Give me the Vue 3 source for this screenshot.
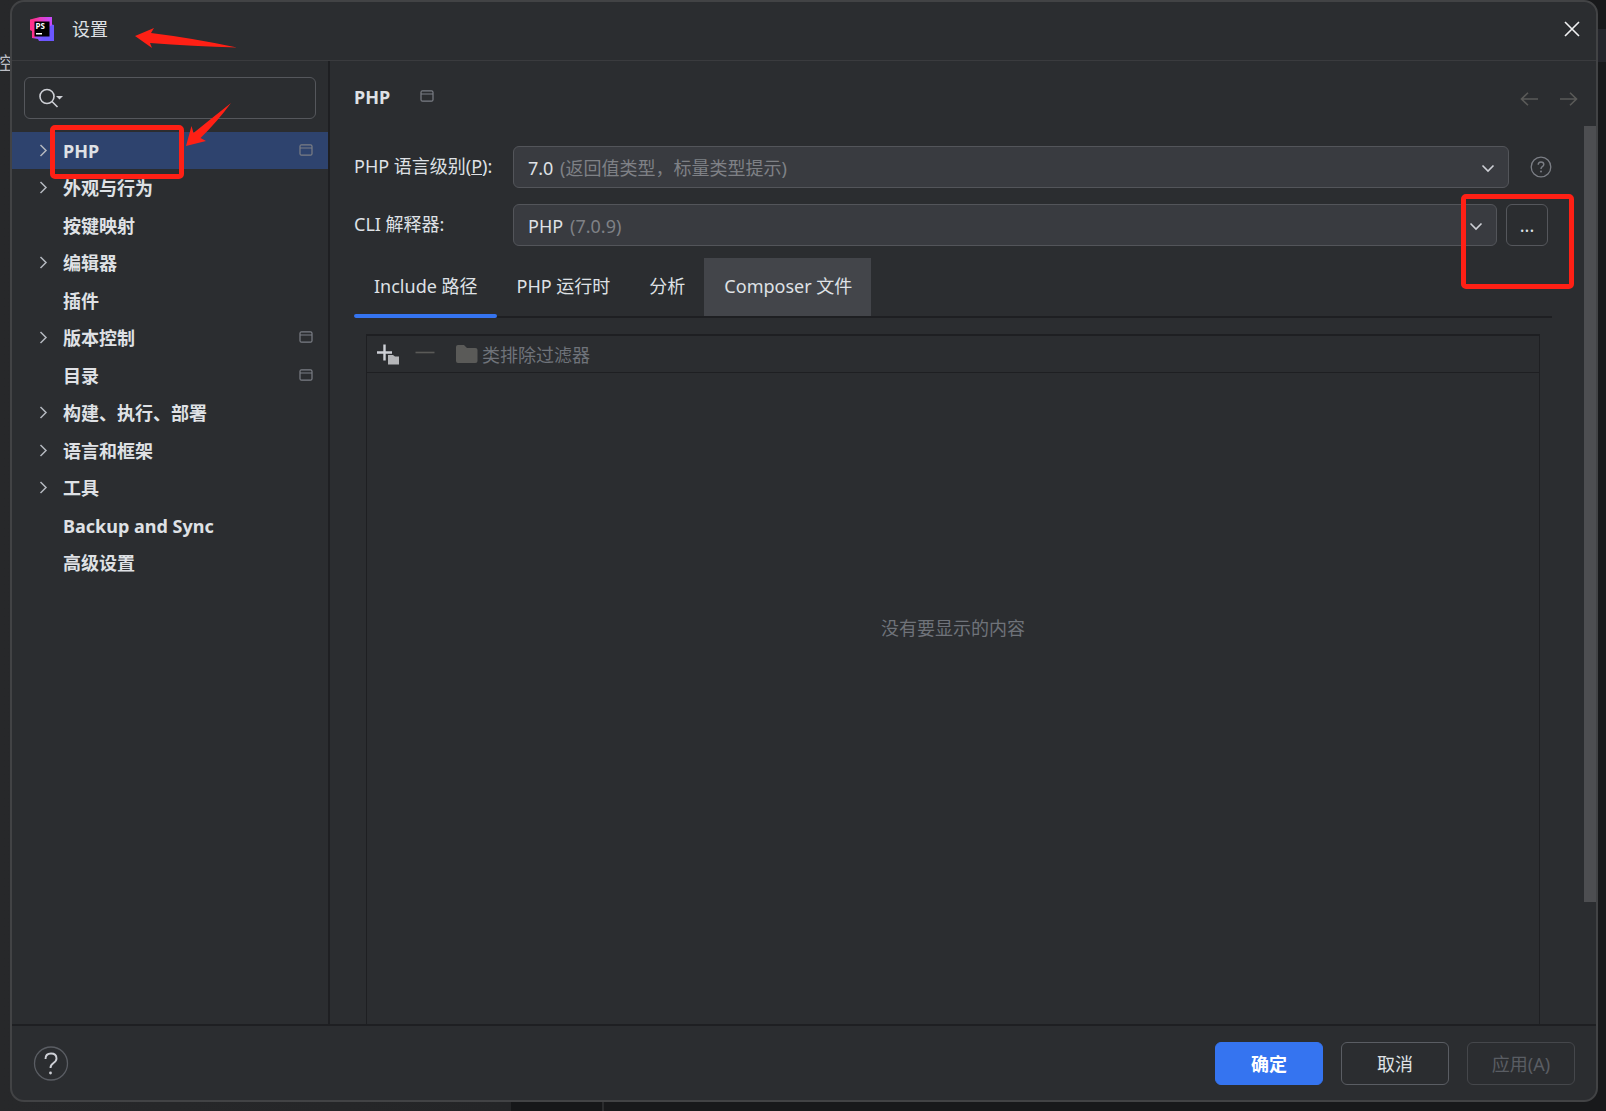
<script setup>
import { ref } from 'vue'

const items = [
  { label: 'PHP', expandable: true, project: true },
  { label: '外观与行为', expandable: true },
  { label: '按键映射' },
  { label: '编辑器', expandable: true },
  { label: '插件' },
  { label: '版本控制', expandable: true, project: true },
  { label: '目录', project: true },
  { label: '构建、执行、部署', expandable: true },
  { label: '语言和框架', expandable: true },
  { label: '工具', expandable: true },
  { label: 'Backup and Sync' },
  { label: '高级设置' }
]
const tabs = ['Include 路径', 'PHP 运行时', '分析', 'Composer 文件']

const selected = ref('PHP')
const activeTab = ref('Include 路径')
const query = ref('')
</script>

<template>
  <div class="desktop">
    <span class="editor-char" aria-hidden="true">控</span>
    <i class="editor-band"></i>

    <section class="dialog" role="dialog" aria-labelledby="dialog-title">
      <header class="titlebar">
        <svg class="logo" width="24" height="24" viewBox="0 0 24 24" aria-hidden="true">
          <defs>
            <linearGradient id="pink" x1="0" y1="0.4" x2="1" y2="0.1">
              <stop offset="0.2" stop-color="#ff318c" />
              <stop offset="0.9" stop-color="#c84af7" />
            </linearGradient>
            <linearGradient id="violet" x1="0" y1="0.5" x2="1" y2="0.5">
              <stop offset="0" stop-color="#c04af7" />
              <stop offset="0.5" stop-color="#6b57ff" />
            </linearGradient>
          </defs>
          <path d="M2 14V21L8 22L9 24H24V8L20 7Z" fill="url(#violet)" />
          <path d="M0 2.500L10 0H22V8L12 14L4 21L2 20.500V14L0 13Z" fill="url(#pink)" />
          <rect x="4.500" y="4.500" width="15" height="15" fill="#000" />
          <rect x="6" y="16" width="6" height="1.500" fill="#fff" />
          <text x="5.500" y="12" class="logo-text">PS</text>
        </svg>
        <h1 id="dialog-title">设置</h1>
        <button class="icon-button close" aria-label="关闭">
          <svg width="16" height="16" viewBox="0 0 16 16"><path d="M1 1L15 15M15 1L1 15" stroke="#f0f1f2" stroke-width="1.600" fill="none" /></svg>
        </button>
      </header>

      <div class="body">
        <aside class="sidebar">
          <label class="search">
            <svg width="26" height="20" viewBox="0 0 26 20" aria-hidden="true">
              <circle cx="8" cy="8.500" r="7" fill="none" stroke="#ced0d6" stroke-width="1.600" />
              <path d="M13 13.500L18.500 19" stroke="#ced0d6" stroke-width="1.600" />
              <path d="M17 8H24L20.500 11.500Z" fill="#ced0d6" />
            </svg>
            <input v-model="query" type="text" aria-label="搜索" />
          </label>
          <ul class="tree">
            <li v-for="item in items" :key="item.label">
              <button class="row" :class="{ selected: item.label === selected }" @click="selected = item.label">
                <svg class="chevron" width="10" height="14" viewBox="0 0 10 14" aria-hidden="true">
                  <path v-if="item.expandable" d="M1.500 1L7 6.500L1.500 12" fill="none" stroke="#b4b8bf" stroke-width="1.500" />
                </svg>
                <span class="row-label">{{ item.label }}</span>
                <svg v-if="item.project" class="project-mark" width="14" height="12" viewBox="0 0 14 12" aria-hidden="true">
                  <path d="M1 4H13M2.500 0.800H11.500Q13 0.800 13 2.300V9.700Q13 11.200 11.500 11.200H2.500Q1 11.200 1 9.700V2.300Q1 0.800 2.500 0.800Z" fill="none" stroke="#7b7e85" stroke-width="1.200" />
                </svg>
              </button>
            </li>
          </ul>
        </aside>

        <main class="content">
          <div class="page-head">
            <h2>PHP</h2>
            <svg class="project-page" width="14" height="12" viewBox="0 0 14 12" aria-hidden="true">
              <path d="M1 4H13M2.500 0.800H11.500Q13 0.800 13 2.300V9.700Q13 11.200 11.500 11.200H2.500Q1 11.200 1 9.700V2.300Q1 0.800 2.500 0.800Z" fill="none" stroke="#7b7e85" stroke-width="1.200" />
            </svg>
            <nav class="history">
              <button class="icon-button" aria-label="后退" disabled>
                <svg width="19" height="14" viewBox="0 0 19 14"><path d="M8 0.700L1.500 7L8 13.300M1.500 7H18" fill="none" stroke="#5a5a58" stroke-width="1.600" /></svg>
              </button>
              <button class="icon-button" aria-label="前进" disabled>
                <svg width="19" height="14" viewBox="0 0 19 14"><path d="M11 0.700L17.500 7L11 13.300M17.500 7H1" fill="none" stroke="#5a5a58" stroke-width="1.600" /></svg>
              </button>
            </nav>
          </div>

          <div class="page-scroll">
            <div class="page-main">
              <div class="field">
                <label for="level">PHP 语言级别(<u>P</u>):</label>
                <div class="combo">
                  <select id="level"><option>7.0</option></select>
                  <span class="note note-level">(返回值类型，标量类型提示)</span>
                  <svg class="arrow" width="14" height="9" viewBox="0 0 14 9" aria-hidden="true"><path d="M1.500 1.500L7 7L12.500 1.500" fill="none" stroke="#ced0d6" stroke-width="1.600" /></svg>
                </div>
                <button class="icon-button help" aria-label="帮助">
                  <svg width="22" height="22" viewBox="0 0 22 22">
                    <circle cx="11" cy="11" r="9.800" fill="none" stroke="#7b7e85" stroke-width="1.300" />
                    <path d="M8.200 8.800Q8.200 6 11 6Q13.800 6 13.800 8.500Q13.800 9.800 12.300 10.700Q11 11.500 11 13" fill="none" stroke="#7b7e85" stroke-width="1.400" />
                    <circle cx="11" cy="15.500" r="1" fill="#7b7e85" />
                  </svg>
                </button>
              </div>
              <div class="field cli">
                <label for="cli">CLI 解释器:</label>
                <div class="combo">
                  <select id="cli"><option>PHP</option></select>
                  <span class="note note-cli">(7.0.9)</span>
                  <svg class="arrow" width="14" height="9" viewBox="0 0 14 9" aria-hidden="true"><path d="M1.500 1.500L7 7L12.500 1.500" fill="none" stroke="#ced0d6" stroke-width="1.600" /></svg>
                </div>
                <button class="more">...</button>
              </div>

              <div class="tabs" role="tablist">
                <button
                  v-for="tab in tabs"
                  :key="tab"
                  class="tab"
                  :class="{ active: tab === activeTab, hovered: tab === 'Composer 文件' }"
                  role="tab"
                  :aria-selected="tab === activeTab"
                  @click="activeTab = tab"
                >{{ tab }}</button>
              </div>

              <div class="panel">
                <div class="toolbar">
                  <button class="icon-button" aria-label="添加">
                    <svg width="24" height="22" viewBox="0 0 24 22">
                      <path d="M8.500 1.500V17.500M1 9.500H16" stroke="#ced0d6" stroke-width="2.400" fill="none" />
                      <path d="M12 12H17L19 13.500H23V21.500H12Z" fill="#b4b5b8" />
                    </svg>
                  </button>
                  <button class="icon-button remove" aria-label="移除" disabled>
                    <svg width="20" height="22" viewBox="0 0 20 22"><path d="M0.500 9.500H19.500" stroke="#5a5a58" stroke-width="1.600" /></svg>
                  </button>
                  <button class="filter" disabled>
                    <svg width="22" height="18" viewBox="0 0 22 18" aria-hidden="true"><path d="M2 0H8L11 3H19.500Q21.500 3 21.500 5V16Q21.500 18 19.500 18H2Q0 18 0 16V2Q0 0 2 0Z" fill="#5a5a58" /></svg>
                    <span>类排除过滤器</span>
                  </button>
                </div>
                <p class="empty">没有要显示的内容</p>
              </div>
            </div>
            <div class="scrollbar"><i></i></div>
          </div>
        </main>
      </div>

      <footer class="footer">
        <button class="icon-button" aria-label="帮助">
          <svg width="36" height="36" viewBox="0 0 36 36">
            <circle cx="18" cy="18.500" r="16.500" fill="none" stroke="#5a5d63" stroke-width="1.300" />
            <path d="M12.500 14Q12.500 8.500 18 8.500Q23.500 8.500 23.500 13.500Q23.500 16 20.500 18Q17.500 20 17.500 23" fill="none" stroke="#ced0d6" stroke-width="1.900" />
            <circle cx="17.500" cy="28" r="1.400" fill="#ced0d6" />
          </svg>
        </button>
        <div class="actions">
          <button class="btn primary">确定</button>
          <button class="btn">取消</button>
          <button class="btn" disabled>应用(A)</button>
        </div>
      </footer>

      <i class="mark mark-php"></i>
      <i class="mark mark-more"></i>
      <svg class="pointers" width="240" height="150" viewBox="0 0 240 150" aria-hidden="true">
        <path d="M123 34L142 26L139 31Q180 36 225 45.500Q180 44 138 41L140 46Z" fill="#ff2015" />
        <path d="M174 144L179.500 124L181.500 131Q200 116 219 101Q205 120 188.500 136L194 139Z" fill="#ff2015" />
      </svg>
    </section>
  </div>
</template>

<style>
body {
  margin: 0;
  background: #1b1c1e;
}
</style>

<style scoped>
.desktop {
  position: relative;
  display: flex;
  box-sizing: border-box;
  min-height: 100vh;
  padding: 0 8px 9px 10px;
  overflow: hidden;
  background: linear-gradient(90deg, #27282a 0, #242527 511px, #161719 511px, #161719 602px, #2b2c2e 602px, #2b2c2e 604px, #18191b 604px);
  color: #dfe1e5;
  font: 18px/24px "Noto Sans", "Noto Sans CJK SC", sans-serif;
}
.editor-char {
  position: absolute;
  top: 51px;
  left: -6px;
  color: #bcbec4;
}
.editor-band {
  position: absolute;
  top: 29px;
  right: 0;
  width: 8px;
  height: 33px;
  background: #25262c;
}
.dialog {
  position: relative;
  display: flex;
  flex: 1;
  flex-direction: column;
  min-width: 0;
  border: 2px solid #424345;
  border-radius: 14px;
  background: #2b2d30;
}
button,
select,
input {
  margin: 0;
  padding: 0;
  border: 0;
  background: none;
  color: inherit;
  font: inherit;
}
h1,
h2,
ul,
p {
  margin: 0;
  padding: 0;
  font: inherit;
  list-style: none;
}
svg {
  display: block;
  flex: none;
}
.icon-button {
  display: block;
}
.titlebar {
  display: flex;
  align-items: center;
  box-sizing: border-box;
  height: 59px;
  padding: 0 16px 4px 18px;
  border-bottom: 1px solid #3a3b3e;
}
.titlebar h1 {
  margin-left: 18px;
}
.logo-text {
  fill: #fff;
  font: bold 8px "Noto Sans", sans-serif;
}
.close {
  margin-left: auto;
}
.body {
  display: flex;
  flex: 1;
}
.sidebar {
  flex: none;
  width: 316px;
  padding-top: 16px;
  border-right: 2px solid #1e1f22;
}
.search {
  display: flex;
  align-items: center;
  box-sizing: border-box;
  height: 42px;
  margin: 0 12px;
  padding: 0 12px 0 14px;
  border: 1px solid #55575c;
  border-radius: 6px;
}
.search input {
  flex: 1;
  min-width: 0;
  outline: 0;
}
.tree {
  margin-top: 13px;
}
.row {
  display: flex;
  align-items: center;
  width: 100%;
  height: 37px;
  padding: 0 15px 0 27px;
  font-weight: 700;
  text-align: left;
}
li:nth-child(even) .row {
  height: 38px;
}
.row.selected {
  background: #2e436e;
}
.row-label {
  flex: 1;
  margin-left: 14px;
}
.project-mark {
  margin-bottom: 2px;
}
.content {
  display: flex;
  flex: 1;
  flex-direction: column;
  min-width: 0;
}
.page-head {
  display: flex;
  align-items: center;
  height: 65px;
  padding: 0 18px 0 24px;
}
.page-head h2 {
  margin: 7px 30px 0 0;
  font-weight: 700;
}
.project-page {
  margin-top: 5px;
}
.history {
  display: flex;
  gap: 20px;
  margin: 10px 0 0 auto;
}
.page-scroll {
  display: flex;
  flex: 1;
}
.page-main {
  display: flex;
  flex: 1;
  flex-direction: column;
  min-width: 0;
  padding: 20px 32px 0 24px;
}
.field {
  display: flex;
  align-items: center;
  height: 42px;
}
.cli {
  margin-top: 16px;
  padding-right: 4px;
}
.field label {
  flex: none;
  width: 159px;
  padding-bottom: 2px;
}
.combo {
  position: relative;
  flex: 1;
}
.combo select {
  display: block;
  box-sizing: border-box;
  width: 100%;
  height: 42px;
  padding: 2px 0 0 14px;
  border: 1px solid #53555a;
  border-radius: 6px;
  appearance: none;
  background: #393b40;
}
.note {
  position: absolute;
  top: 10px;
  color: #7f8186;
  pointer-events: none;
}
.note-level {
  left: 47px;
}
.note-cli {
  left: 57px;
}
.arrow {
  position: absolute;
  top: 18px;
  right: 14px;
  pointer-events: none;
}
.help {
  margin-left: 21px;
}
.more {
  box-sizing: border-box;
  width: 42px;
  height: 42px;
  margin-left: 9px;
  border: 1px solid #55575c;
  border-radius: 6px;
}
.tabs {
  display: flex;
  height: 58px;
  margin-top: 12px;
  border-bottom: 2px solid #1e1f22;
}
.tab {
  position: relative;
  height: 58px;
  padding: 0 19px 2px 20px;
}
.tab.hovered {
  background: #43454a;
}
.tab.active::after {
  position: absolute;
  right: 0;
  bottom: -2px;
  left: 0;
  height: 4px;
  border-radius: 2px;
  background: #3574f0;
  content: "";
}
.panel {
  display: flex;
  flex: 1;
  flex-direction: column;
  margin: 16px 12px 0;
  border: 1px solid #1e1f22;
  border-top-width: 2px;
  border-bottom: 0;
}
.toolbar {
  display: flex;
  align-items: center;
  height: 36px;
  padding-left: 9px;
  border-bottom: 1px solid #1e1f22;
}
.remove {
  margin-left: 15px;
}
.filter {
  display: flex;
  align-items: center;
  gap: 4px;
  margin-left: 21px;
  color: #6f737a;
}
.filter span {
  padding-top: 2px;
}
.empty {
  margin-top: 243px;
  color: #6f737a;
  text-align: center;
}
.scrollbar {
  width: 12px;
}
.scrollbar i {
  display: block;
  height: 776px;
  background: #4d4e51;
}
.footer {
  display: flex;
  align-items: center;
  justify-content: space-between;
  height: 74px;
  padding: 0 21px;
  border-top: 2px solid #1e1f22;
}
.actions {
  display: flex;
  gap: 18px;
}
.btn {
  box-sizing: border-box;
  width: 108px;
  height: 43px;
  padding-top: 2px;
  border: 1px solid #5a5d63;
  border-radius: 6px;
}
.btn.primary {
  border-color: #3574f0;
  background: #3574f0;
  color: #fff;
  font-weight: 700;
}
.btn:disabled {
  border-color: #45474b;
  color: #5a5d63;
}
.mark {
  position: absolute;
  box-sizing: border-box;
  border: 5px solid #ff2015;
  border-radius: 5px;
  pointer-events: none;
}
.mark-php {
  top: 123px;
  left: 38px;
  width: 134px;
  height: 54px;
}
.mark-more {
  top: 192px;
  right: 22px;
  width: 113px;
  height: 95px;
}
.pointers {
  position: absolute;
  top: 0;
  left: 0;
  pointer-events: none;
}
</style>
